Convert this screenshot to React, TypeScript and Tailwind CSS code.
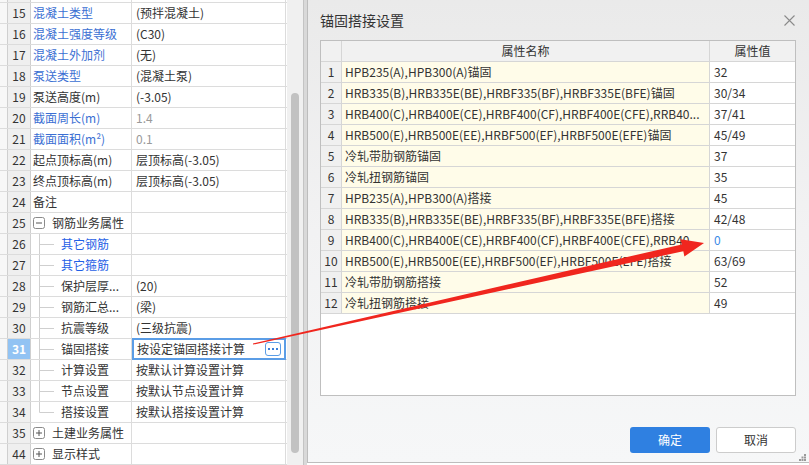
import React from "react";

type Row = {
  n: number;
  name: string;
  val: string;
  kind?: "blue" | "blue2";
  grayVal?: boolean;
  group?: "minus" | "plus";
  child?: boolean;
  last?: boolean;
  selected?: boolean;
};

const LEFT_ROWS: Row[] = [
  { n: 15, name: "混凝土类型", val: "(预拌混凝土)", kind: "blue" },
  { n: 16, name: "混凝土强度等级", val: "(C30)", kind: "blue" },
  { n: 17, name: "混凝土外加剂", val: "(无)", kind: "blue" },
  { n: 18, name: "泵送类型", val: "(混凝土泵)", kind: "blue" },
  { n: 19, name: "泵送高度(m)", val: "(-3.05)" },
  { n: 20, name: "截面周长(m)", val: "1.4", kind: "blue", grayVal: true },
  { n: 21, name: "截面面积(m²)", val: "0.1", kind: "blue", grayVal: true },
  { n: 22, name: "起点顶标高(m)", val: "层顶标高(-3.05)" },
  { n: 23, name: "终点顶标高(m)", val: "层顶标高(-3.05)" },
  { n: 24, name: "备注", val: "" },
  { n: 25, name: "钢筋业务属性", val: "", group: "minus" },
  { n: 26, name: "其它钢筋", val: "", child: true, kind: "blue2" },
  { n: 27, name: "其它箍筋", val: "", child: true, kind: "blue2" },
  { n: 28, name: "保护层厚...", val: "(20)", child: true },
  { n: 29, name: "钢筋汇总...", val: "(梁)", child: true },
  { n: 30, name: "抗震等级", val: "(三级抗震)", child: true },
  { n: 31, name: "锚固搭接", val: "按设定锚固搭接计算", child: true, selected: true },
  { n: 32, name: "计算设置", val: "按默认计算设置计算", child: true },
  { n: 33, name: "节点设置", val: "按默认节点设置计算", child: true },
  { n: 34, name: "搭接设置", val: "按默认搭接设置计算", child: true, last: true },
  { n: 35, name: "土建业务属性", val: "", group: "plus" },
  { n: 44, name: "显示样式", val: "", group: "plus" },
];

const ANCHOR_ROWS: [string, string][] = [
  ["HPB235(A),HPB300(A)锚固", "32"],
  ["HRB335(B),HRB335E(BE),HRBF335(BF),HRBF335E(BFE)锚固", "30/34"],
  ["HRB400(C),HRB400E(CE),HRBF400(CF),HRBF400E(CFE),RRB40...", "37/41"],
  ["HRB500(E),HRB500E(EE),HRBF500(EF),HRBF500E(EFE)锚固", "45/49"],
  ["冷轧带肋钢筋锚固", "37"],
  ["冷轧扭钢筋锚固", "35"],
  ["HPB235(A),HPB300(A)搭接", "45"],
  ["HRB335(B),HRB335E(BE),HRBF335(BF),HRBF335E(BFE)搭接", "42/48"],
  ["HRB400(C),HRB400E(CE),HRBF400(CF),HRBF400E(CFE),RRB40...", "0"],
  ["HRB500(E),HRB500E(EE),HRBF500(EF),HRBF500E(EFE)搭接", "63/69"],
  ["冷轧带肋钢筋搭接", "52"],
  ["冷轧扭钢筋搭接", "49"],
];

const FONT = { fontFamily: '"Noto Sans CJK SC", "Noto Sans", sans-serif' };

function TreeBox({ plus }: { plus: boolean }) {
  return (
    <svg width="12" height="12" viewBox="0 0 12 12" className="shrink-0">
      <rect x="0.5" y="0.5" width="11" height="11" rx="2" fill="#fff" stroke="#8a8a8a" />
      <line x1="3" y1="6" x2="9" y2="6" stroke="#555" />
      {plus && <line x1="6" y1="3" x2="6" y2="9" stroke="#555" />}
    </svg>
  );
}

function TreeLine({ last }: { last?: boolean }) {
  return (
    <svg width="30" height="20" viewBox="0 0 30 20" className="shrink-0">
      <line x1="8.5" y1="0" x2="8.5" y2={last ? 10.5 : 20} stroke="#cfcfcf" />
      <line x1="8.5" y1="10.5" x2="23" y2="10.5" stroke="#cfcfcf" />
    </svg>
  );
}

function LeftRow({ row }: { row: Row }) {
  const nameColor =
    row.kind === "blue" ? "text-[#3b6fd3]" : row.kind === "blue2" ? "text-[#1f5fe6]" : "text-[#333]";
  return (
    <div className="flex h-[21px] border-b border-[#dcdcdc]">
      <div className="w-[8px] shrink-0 bg-[#f7f7f7] border-r border-[#cfcfcf]" />
      <div
        className={
          row.selected
            ? "w-[23px] shrink-0 flex items-center justify-center bg-[#92c3f3] text-white font-bold border-r border-[#cfcfcf]"
            : "w-[23px] shrink-0 flex items-center justify-center bg-[#efefef] text-[#333] border-r border-[#cfcfcf]"
        }
      >
        {row.n}
      </div>
      <div className={`w-[101px] shrink-0 flex items-center border-r border-[#dcdcdc] whitespace-nowrap overflow-hidden ${nameColor}`}>
        {row.group ? (
          <>
            <span className="w-[2px]" />
            <TreeBox plus={row.group === "plus"} />
            <span className="ml-[7px]">{row.name}</span>
          </>
        ) : row.child ? (
          <>
            <TreeLine last={row.last} />
            <span>{row.name}</span>
          </>
        ) : (
          <span className="pl-[2px]">{row.name}</span>
        )}
      </div>
      {row.selected ? (
        <div className="w-[154px] shrink-0 flex items-center justify-between border-2 border-[#5b9de6] -mt-[1px] h-[22px] pl-[3px] pr-[3px] text-[#333]">
          <span>{row.val}</span>
          <span className="w-[16px] h-[14px] rounded-[3px] border border-[#5b9de6] bg-white flex items-center justify-center gap-[2px]">
            <span className="w-[2px] h-[2px] bg-[#3c7fd8]" />
            <span className="w-[2px] h-[2px] bg-[#3c7fd8]" />
            <span className="w-[2px] h-[2px] bg-[#3c7fd8]" />
          </span>
        </div>
      ) : (
        <div
          className={`w-[154px] shrink-0 flex items-center pl-[4px] border-r border-[#dcdcdc] whitespace-nowrap ${
            row.grayVal ? "text-[#9a9a9a]" : "text-[#333]"
          }`}
        >
          {row.val}
        </div>
      )}
    </div>
  );
}

function LeftPanel() {
  return (
    <div className="w-[303px] shrink-0 flex h-[465px] bg-white overflow-hidden">
      <div className="w-[287px] shrink-0 flex flex-col">
        <div className="flex h-[3px] border-b border-[#dcdcdc]">
          <div className="w-[8px] bg-[#f7f7f7] border-r border-[#cfcfcf]" />
          <div className="w-[23px] bg-[#efefef] border-r border-[#cfcfcf]" />
          <div className="w-[101px] border-r border-[#dcdcdc]" />
          <div className="w-[154px] border-r border-[#dcdcdc]" />
        </div>
        {LEFT_ROWS.map((r) => (
          <LeftRow key={r.n} row={r} />
        ))}
      </div>
      <div className="flex-1 bg-[#f0f0f0] flex justify-center pt-[93px] pb-[12px]">
        <div className="w-[8px] h-[360px] rounded-full bg-[#c2c2c2]" />
      </div>
    </div>
  );
}

function Dialog() {
  return (
    <div className="flex-1 h-[463px] flex flex-col border-l border-b border-[#bdbdbd] bg-gradient-to-b from-[#eaeaea] via-[#f2f2f3] to-[#f6f7f8] pl-[12px] pr-[13px]">
      <div className="h-[40px] flex items-center justify-between shrink-0">
        <span className="text-[14px] text-[#333] -mt-[1px]">锚固搭接设置</span>
        <svg width="11" height="11" viewBox="0 0 11 11" className="mr-[1px]">
          <path d="M0.5 0.5 L10.5 10.5 M10.5 0.5 L0.5 10.5" stroke="#8a8a8a" strokeWidth="1.1" />
        </svg>
      </div>
      <div className="h-[356px] border border-[#bfbfbf] bg-white flex flex-col shrink-0">
        <div className="flex h-[21px] border-b border-[#d6d6d6] bg-[#f1f1f1] text-[#333]">
          <div className="w-[21px] shrink-0 border-r border-[#d6d6d6]" />
          <div className="w-[368px] shrink-0 border-r border-[#d6d6d6] flex items-center justify-center">属性名称</div>
          <div className="flex-1 flex items-center justify-center">属性值</div>
        </div>
        {ANCHOR_ROWS.map(([name, val], i) => (
          <div key={i} className="flex h-[21px] border-b border-[#d6d6d6] text-[#333]">
            <div className="w-[21px] shrink-0 border-r border-[#d6d6d6] bg-[#f0f0f0] flex items-center justify-center">
              {i + 1}
            </div>
            <div className="w-[368px] shrink-0 border-r border-[#d6d6d6] bg-[#fffce9] flex items-center pl-[3px] whitespace-nowrap">
              {name}
            </div>
            <div className={`flex-1 flex items-center pl-[4px] ${val === "0" ? "text-[#3a8ae6]" : ""}`}>{val}</div>
          </div>
        ))}
      </div>
      <div className="flex justify-end gap-[6px] pt-[31px]">
        <button className="w-[80px] h-[26px] rounded-[3px] bg-[#2f80e1] text-white">确定</button>
        <button className="w-[80px] h-[26px] rounded-[3px] bg-white border border-[#cccccc] text-[#333]">取消</button>
      </div>
      <div className="flex justify-end mt-auto -mr-[10px] mb-[1px]">
        <svg width="7" height="7" viewBox="0 0 7 7">
          <rect x="5" y="0" width="2" height="2" fill="#9a9a9a" />
          <rect x="2.5" y="2.5" width="2" height="2" fill="#9a9a9a" />
          <rect x="5" y="2.5" width="2" height="2" fill="#9a9a9a" />
          <rect x="0" y="5" width="2" height="2" fill="#9a9a9a" />
          <rect x="2.5" y="5" width="2" height="2" fill="#9a9a9a" />
          <rect x="5" y="5" width="2" height="2" fill="#9a9a9a" />
        </svg>
      </div>
    </div>
  );
}

export default function App() {
  return (
    <div className="relative w-[809px] h-[465px] overflow-hidden bg-white text-[12px] leading-[20px]" style={FONT}>
      <div className="flex h-full">
        <LeftPanel />
        <div className="w-[4px] shrink-0 bg-[#d9d9d9] border-l border-[#c4c4c4]" />
        <Dialog />
      </div>
      {/* annotation arrow drawn over the screenshot */}
      <svg className="absolute inset-0 pointer-events-none" width="809" height="465" viewBox="0 0 809 465">
        <polygon
          points="253.1,344.6 683.3,251.2 684.4,256.5 704,243 680.6,239.2 681.7,244.4 252.9,343.4"
          fill="#f0261e"
        />
      </svg>
    </div>
  );
}
